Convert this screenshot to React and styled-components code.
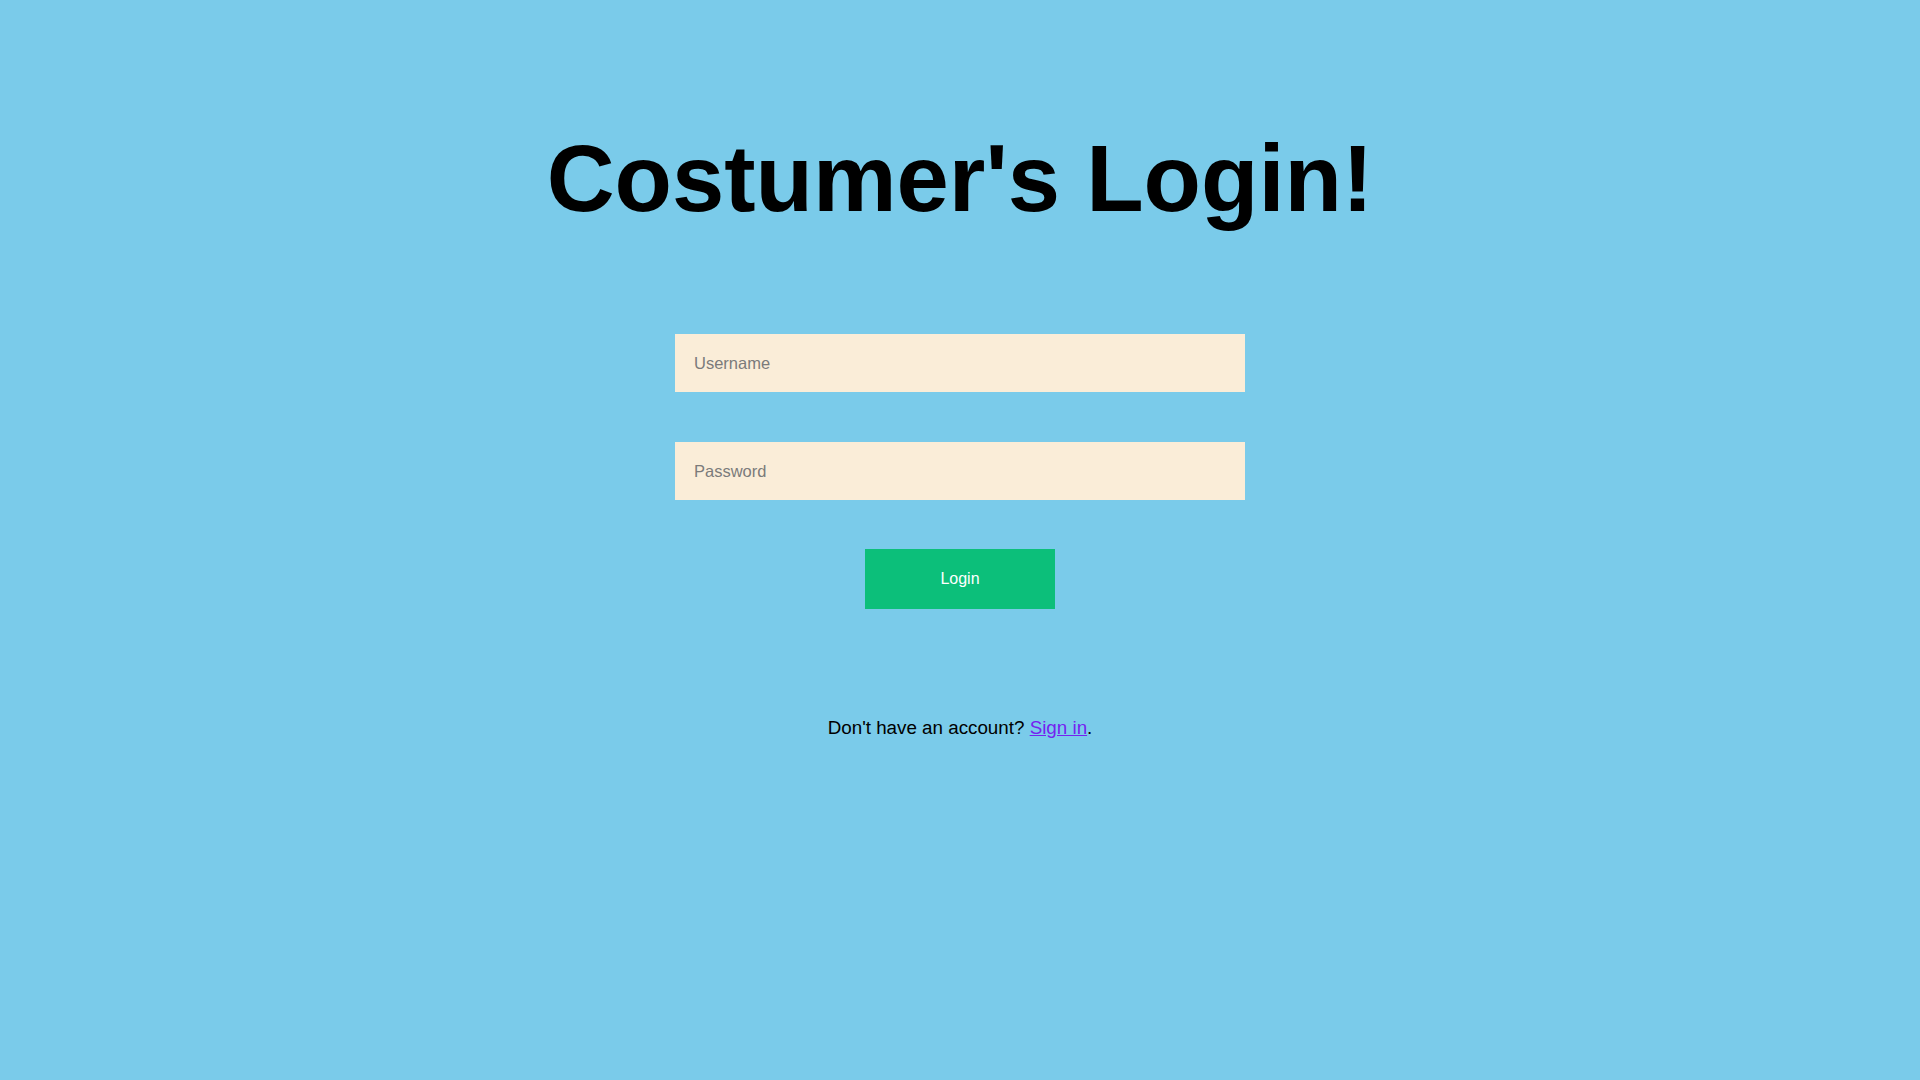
import React from "react";
import styled, { createGlobalStyle } from "styled-components";

const GlobalStyle = createGlobalStyle`
    html, body {
        margin: 0;
        padding: 0;
        background-color: #7acbea;
        font-family: "Liberation Sans", Arial, sans-serif;
    }
`;

const App = () => {
    return (
        <>
            <GlobalStyle />
            <Wrapper>
                <h1 className="title">Costumer's Login!</h1>
                <form className="loginForm" onSubmit={(e) => e.preventDefault()}>
                    <Input type="text" name="username" placeholder="Username" autoComplete="off" />
                    <Input type="password" name="password" placeholder="Password" autoComplete="off" />
                    <Button type="submit">Login</Button>
                </form>
                <p className="signup">
                    Don't have an account? <a href="#signin">Sign in</a>.
                </p>
            </Wrapper>
        </>
    );
};

const Wrapper = styled.main`
    min-height: 100vh;
    display: flex;
    flex-direction: column;
    align-items: center;
    padding-top: 125px;
    box-sizing: border-box;

    .title {
        margin: 0;
        font-size: 94px;
        line-height: 108px;
        font-weight: 700;
        color: #000;
    }

    .loginForm {
        margin-top: 101px;
        display: flex;
        flex-direction: column;
        align-items: center;
        gap: 50px;
    }

    .signup {
        margin: 108px 0 0 0;
        font-size: 18.8px;
        line-height: 21px;
        color: #000;

        a {
            color: #7522f0;
            text-decoration: underline;
        }
    }
`;

const Input = styled.input`
    width: 570px;
    height: 58px;
    box-sizing: border-box;
    padding: 0 19px;
    border: none;
    outline: none;
    background-color: #faedd8;
    font-family: "Liberation Sans", Arial, sans-serif;
    font-size: 16.5px;
    color: #333;

    &::placeholder {
        color: #7b7b7b;
    }
`;

const Button = styled.button`
    width: 190px;
    height: 60px;
    margin-top: -1px;
    border: none;
    background-color: #0cbf7a;
    color: #fff;
    font-family: "Liberation Sans", Arial, sans-serif;
    font-size: 16px;
    cursor: pointer;
`;

export default App;
